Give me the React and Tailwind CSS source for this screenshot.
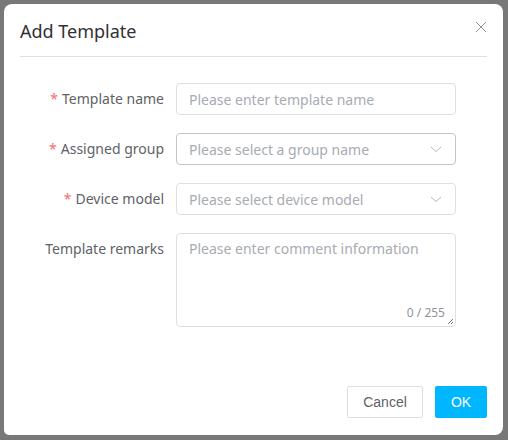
import React from "react";

const font = { fontFamily: '"Noto Sans", "Liberation Sans", sans-serif' };

function Label({ required, children }) {
  return (
    <div className="w-[172px] shrink-0 pr-3 text-right text-[14px] leading-[32px] text-[#606266]">
      {required && <span className="mr-1 text-[#f56c6c]">*</span>}
      {children}
    </div>
  );
}

function Chevron() {
  return (
    <svg width="14" height="14" viewBox="0 0 14 14" className="text-[#b4b7bd]">
      <path d="M2 5 L7 9.5 L12 5" fill="none" stroke="currentColor" strokeWidth="1" />
    </svg>
  );
}

function TextField({ placeholder }) {
  return (
    <div className="flex h-[32px] w-[280px] items-center rounded-[4px] border border-[#dcdfe6] px-3 text-[14px] text-[#a8abb2]">
      {placeholder}
    </div>
  );
}

function SelectField({ placeholder, active }) {
  return (
    <div
      className={
        "flex h-[32px] w-[280px] items-center justify-between rounded-[4px] border pl-3 pr-[12px] text-[14px] text-[#a8abb2] " +
        (active ? "border-[#c0c4cc]" : "border-[#dcdfe6]")
      }
    >
      <span>{placeholder}</span>
      <Chevron />
    </div>
  );
}

export default function App() {
  return (
    <div className="h-[440px] w-[508px] bg-[#787878] p-[4px]" style={font}>
      <div className="flex h-[431px] w-[499px] flex-col rounded-[8px] rounded-bl-[5px] bg-white">
        {/* header */}
        <div className="relative mx-4 flex h-[53px] items-end border-b border-[#dcdfe6] pb-[13px]">
          <h2 className="text-[18px] leading-[24px] text-[#303133]">Add Template</h2>
          <svg
            width="12"
            height="12"
            viewBox="0 0 12 12"
            className="absolute right-0 top-[17px] text-[#909399]"
          >
            <path d="M1 1 L11 11 M11 1 L1 11" stroke="currentColor" strokeWidth="1" />
          </svg>
        </div>

        {/* form */}
        <div className="mt-[26px] flex flex-col gap-[18px]">
          <div className="flex items-start">
            <Label required>Template name</Label>
            <TextField placeholder="Please enter template name" />
          </div>
          <div className="flex items-start">
            <Label required>Assigned group</Label>
            <SelectField placeholder="Please select a group name" active />
          </div>
          <div className="flex items-start">
            <Label required>Device model</Label>
            <SelectField placeholder="Please select device model" />
          </div>
          <div className="flex items-start">
            <Label>Template remarks</Label>
            <div className="relative h-[94px] w-[280px] rounded-[4px] border border-[#dcdfe6] px-3 pt-[4px] text-[14px] leading-[22px] text-[#a8abb2]">
              Please enter comment information
              <span className="absolute bottom-[2px] right-[10px] text-[12px] text-[#909399]">0 / 255</span>
              <svg width="7" height="7" viewBox="0 0 7 7" className="absolute bottom-[1px] right-[1px] text-[#555]">
                <path d="M1 6 L6 1 M4 6 L6 4" stroke="currentColor" strokeWidth="0.8" />
              </svg>
            </div>
          </div>
        </div>

        {/* footer */}
        <div className="mt-auto flex justify-end gap-3 pb-[17px] pr-4" style={{ fontFamily: '"Liberation Sans", Arial, sans-serif' }}>
          <button className="h-[32px] w-[76px] rounded-[2px] border border-[#dcdfe6] bg-white text-[14px] text-[#606266]">
            Cancel
          </button>
          <button className="h-[32px] w-[52px] rounded-[2px] bg-[#00b7ff] text-[14px] text-white">OK</button>
        </div>
      </div>
    </div>
  );
}
